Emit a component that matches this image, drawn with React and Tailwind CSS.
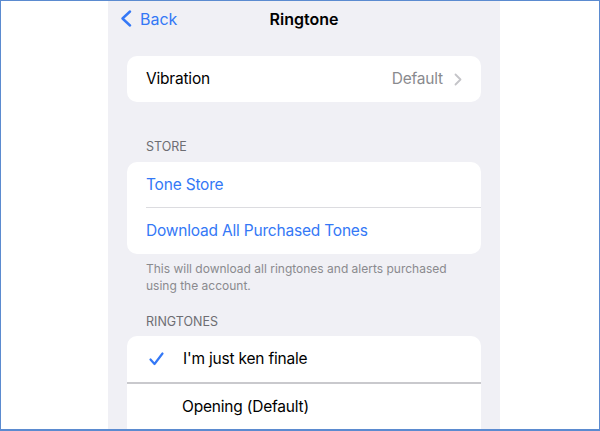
import React from "react";

const blue = "text-[#3478f6]";
const body = "text-[15.5px] tracking-[-0.2px]";

function Chevron({ className }) {
  return (
    <svg className={className} width="8" height="13" viewBox="0 0 8 13" fill="none">
      <path d="M1.5 1.5L6.5 6.5L1.5 11.5" stroke="currentColor" strokeWidth="1.8" strokeLinecap="round" strokeLinejoin="round" />
    </svg>
  );
}

export default function App() {
  return (
    <div
      className="w-[600px] h-[431px] bg-white border border-b-2 border-[#5b8bd0] pl-[107px] overflow-hidden"
      style={{ fontFamily: "Inter, 'Liberation Sans', sans-serif" }}
    >
      <div className="w-[392px] h-full bg-[#f0f0f5] flex flex-col">
        {/* Nav bar */}
        <div className="relative h-[35px] flex items-center justify-center shrink-0">
          <div className={`absolute left-[12px] top-0 h-full flex items-center gap-[8px] ${blue}`}>
            <svg width="12" height="17" viewBox="0 0 12 17" fill="none">
              <path d="M10 1.5L2.5 8.5L10 15.5" stroke="currentColor" strokeWidth="2.4" strokeLinecap="round" strokeLinejoin="round" />
            </svg>
            <span className="text-[16px] leading-none">Back</span>
          </div>
          <span className="text-[16px] font-semibold text-black leading-none">Ringtone</span>
        </div>

        {/* Vibration */}
        <div className="mx-[19px] mt-[20px] h-[46px] bg-white rounded-[10px] flex items-center justify-between pl-[19px] pr-[19px] shrink-0">
          <span className={`${body} text-black`}>Vibration</span>
          <div className="flex items-center gap-[11px] text-[#8a8a8e]">
            <span className={body}>Default</span>
            <Chevron className="text-[#c4c4c8]" />
          </div>
        </div>

        {/* Store */}
        <div className="mx-[19px] mt-[37px] pl-[19px] h-[16px] text-[12.5px] leading-[16px] text-[#6d6d72] uppercase shrink-0">Store</div>
        <div className="mx-[19px] mt-[7px] bg-white rounded-[10px] shrink-0">
          <div className={`h-[45px] flex items-center pl-[19px] ${body} ${blue}`}>Tone Store</div>
          <div className="ml-[19px] h-px bg-[#dcdce0]" />
          <div className={`h-[46px] flex items-center pl-[19px] ${body} ${blue}`}>Download All Purchased Tones</div>
        </div>
        <p className="mx-[19px] mt-[6px] pl-[19px] pr-[20px] text-[12px] leading-[17px] text-[#8a8a8e] shrink-0">
          This will download all ringtones and alerts purchased using the account.
        </p>

        {/* Ringtones */}
        <div className="mx-[19px] mt-[20px] pl-[19px] h-[16px] text-[12.5px] leading-[16px] text-[#6d6d72] uppercase shrink-0">Ringtones</div>
        <div className="mx-[19px] mt-[6px] bg-white rounded-t-[10px] flex-1">
          <div className="h-[46px] flex items-center">
            <div className="w-[56px] flex justify-center pl-[3px]">
              <svg width="15" height="14" viewBox="0 0 15 14" fill="none" className={blue}>
                <path d="M1.5 7.5L5.5 12L13.5 1.5" stroke="currentColor" strokeWidth="2.2" strokeLinecap="round" strokeLinejoin="round" />
              </svg>
            </div>
            <span className={`${body} text-black`}>I'm just ken finale</span>
          </div>
          <div className="h-[2px] bg-[#c9c9cd]" />
          <div className="h-[46px] flex items-center pl-[55px]">
            <span className={`${body} text-black`}>Opening (Default)</span>
          </div>
        </div>
      </div>
    </div>
  );
}
